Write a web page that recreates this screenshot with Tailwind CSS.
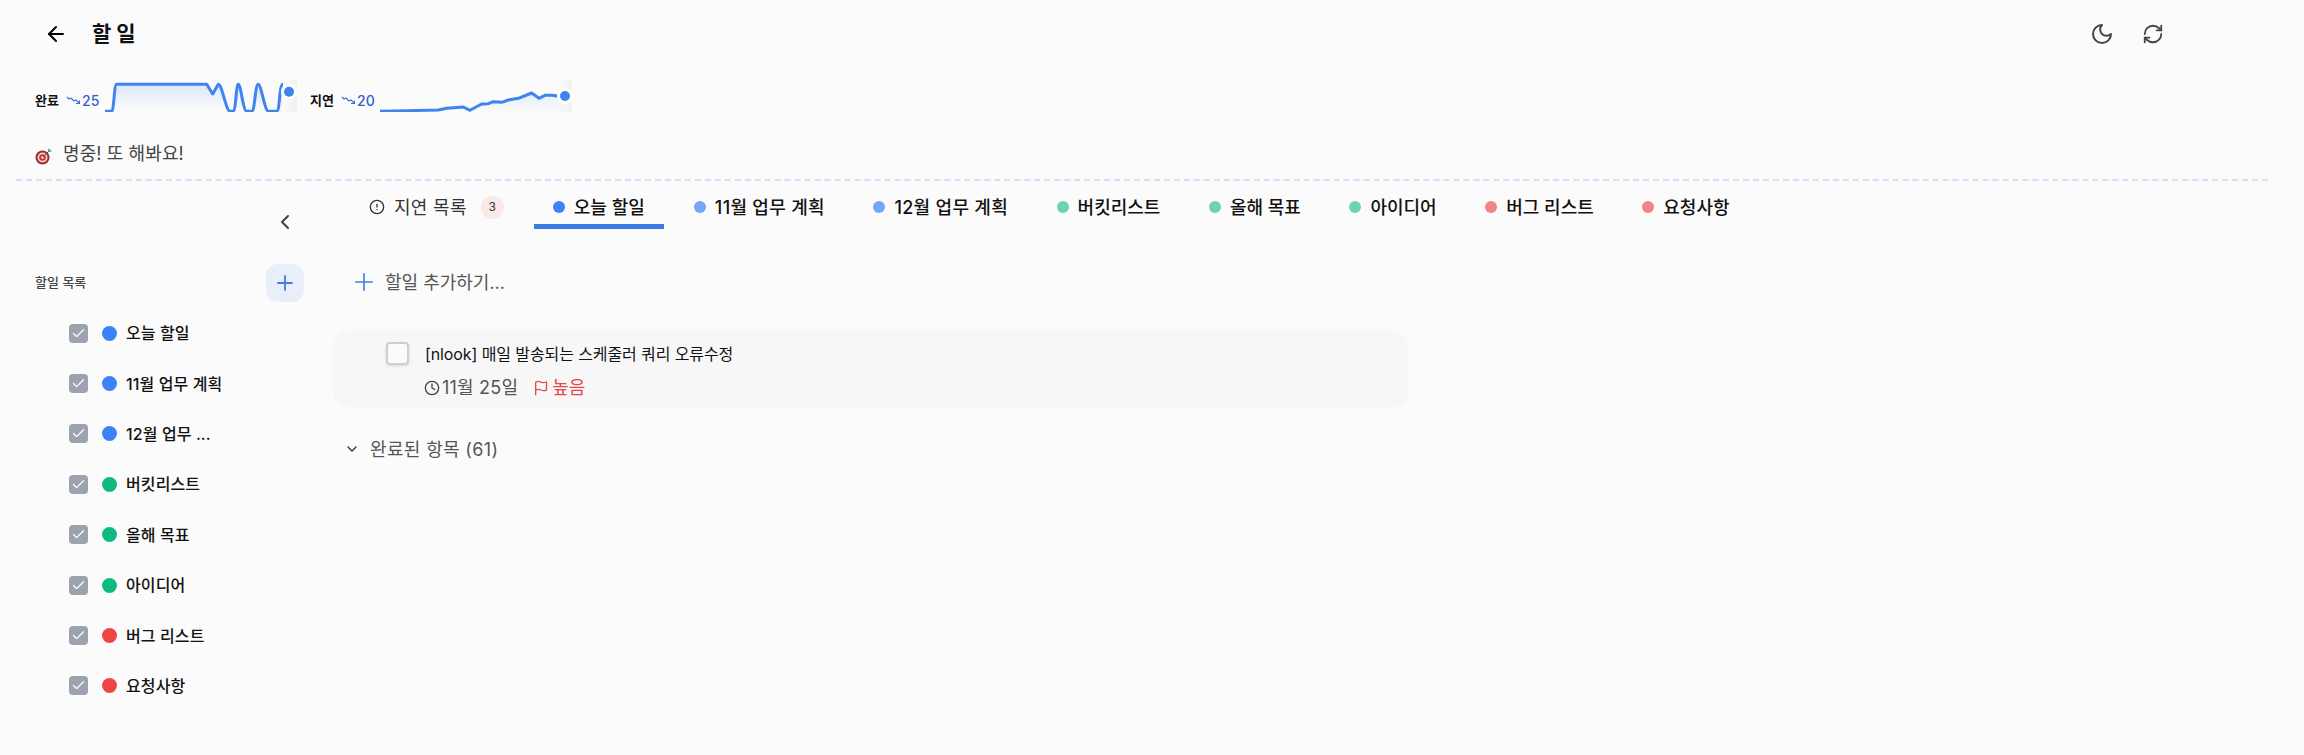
<!DOCTYPE html>
<html lang="ko">
<head>
<meta charset="utf-8">
<title>할 일</title>
<script src="https://cdn.jsdelivr.net/npm/@tailwindcss/browser@4"></script>
</head>
<body class="bg-[#fbfbfb] font-['Inter','Noto_Sans_CJK_KR',sans-serif] text-[#111] overflow-hidden">
<div class="w-[2304px] h-[755px] flex flex-col">

  <!-- header -->
  <header class="h-[68px] flex items-center pl-[44px] pr-[140px] shrink-0">
    <svg class="w-6 h-6 text-black" viewBox="0 0 24 24" fill="none" stroke="currentColor" stroke-width="2" stroke-linecap="round" stroke-linejoin="round"><path d="m12 19-7-7 7-7"/><path d="M19 12H5"/></svg>
    <h1 class="ml-6 text-[21px] font-bold">할 일</h1>
    <div class="ml-auto flex items-center gap-7 text-[#444]">
      <svg class="w-6 h-6" viewBox="0 0 24 24" fill="none" stroke="currentColor" stroke-width="2" stroke-linecap="round" stroke-linejoin="round"><path d="M12 3a6 6 0 0 0 9 9 9 9 0 1 1-9-9Z"/></svg>
      <svg class="w-[22px] h-[22px]" viewBox="0 0 24 24" fill="none" stroke="currentColor" stroke-width="2" stroke-linecap="round" stroke-linejoin="round"><path d="M3 12a9 9 0 0 1 9-9 9.75 9.75 0 0 1 6.74 2.74L21 8"/><path d="M21 3v5h-5"/><path d="M21 12a9 9 0 0 1-9 9 9.75 9.75 0 0 1-6.74-2.74L3 16"/><path d="M8 16H3v5"/></svg>
    </div>
  </header>

  <!-- stats -->
  <div class="mt-3 h-8 flex items-center pl-[35px] shrink-0">
    <span class="mt-2 text-[13px] font-bold leading-none w-[27px]">완료</span>
    <svg class="mt-2 ml-1 w-[14px] h-[10px] text-[#3b6fd8]" viewBox="0 0 14 10" fill="none" stroke="currentColor" stroke-width="1.100" stroke-linejoin="round"><path d="M1 2l2 2 2-1 3 3 2-1 3 3"/><path d="M10 8.500H13.500V5.500"/></svg>
    <span class="mt-2 ml-[2px] text-[14px] font-medium text-[#2f62c9] w-[23px]">25</span>
    <svg class="w-[192px] h-8" viewBox="0 0 192 32" fill="none">
      <defs>
        <linearGradient id="fillA" x1="0" y1="0" x2="0" y2="1"><stop offset="0" stop-color="#3b82f6" stop-opacity=".16"/><stop offset="1" stop-color="#3b82f6" stop-opacity="0"/></linearGradient>
        <linearGradient id="edgeA" x1="0" y1="0" x2="1" y2="0"><stop offset="0" stop-color="#888" stop-opacity="0"/><stop offset="1" stop-color="#888" stop-opacity=".1"/></linearGradient>
      </defs>
      <rect x="178" width="14" height="32" fill="url(#edgeA)"/>
      <path d="M0 31.300H6.700C9 31.300 9 4.300 11.700 4.300H101.700L107.700 14L113.300 4.300C117 4.300 121 31.300 125 31.300H128C131 31.300 131 4.300 133.300 4.300C136 4.300 138 31.300 141.700 31.300H146.700C150 31.300 150 4.300 153.300 4.300C156 4.300 160 31.300 163.300 31.300H171.700C175 31.300 174 4.300 178 4.300V32H0Z" fill="url(#fillA)"/>
      <path d="M0 31.300H6.700C9 31.300 9 4.300 11.700 4.300H101.700L107.700 14L113.300 4.300C117 4.300 121 31.300 125 31.300H128C131 31.300 131 4.300 133.300 4.300C136 4.300 138 31.300 141.700 31.300H146.700C150 31.300 150 4.300 153.300 4.300C156 4.300 160 31.300 163.300 31.300H171.700C175 31.300 174 4.300 178 4.300" stroke="#3f83ee" stroke-width="3" stroke-linejoin="round"/>
      <circle cx="184" cy="11.700" r="8" fill="#fff"/><circle cx="184" cy="11.700" r="5" fill="#3f83ee"/>
    </svg>
    <span class="mt-2 ml-[13px] text-[13px] font-bold leading-none w-[27px]">지연</span>
    <svg class="mt-2 ml-1 w-[14px] h-[10px] text-[#3b6fd8]" viewBox="0 0 14 10" fill="none" stroke="currentColor" stroke-width="1.100" stroke-linejoin="round"><path d="M1 2l2 2 2-1 3 3 2-1 3 3"/><path d="M10 8.500H13.500V5.500"/></svg>
    <span class="mt-2 ml-[2px] text-[14px] font-medium text-[#2f62c9] w-[23px]">20</span>
    <svg class="w-[192px] h-8" viewBox="0 0 192 32" fill="none">
      <defs>
        <linearGradient id="fillB" x1="0" y1="0" x2="0" y2="1"><stop offset="0" stop-color="#3b82f6" stop-opacity=".12"/><stop offset="1" stop-color="#3b82f6" stop-opacity="0"/></linearGradient>
      </defs>
      <rect x="178" width="14" height="32" fill="url(#edgeA)"/>
      <path d="M0 31.300L26.700 30.700L58.300 30L66.700 28.300L83.300 27L90 30.300L101.700 24L108.300 23.700L113.300 21.700L121.700 22.300L128.300 20L138.300 18.300L151.700 13L159 18.300L165 15.300L171.700 15.300L183 16.700V32H0Z" fill="url(#fillB)"/>
      <path d="M0 31.300L26.700 30.700L58.300 30L66.700 28.300L83.300 27L90 30.300L101.700 24L108.300 23.700L113.300 21.700L121.700 22.300L128.300 20L138.300 18.300L151.700 13L159 18.300L165 15.300L171.700 15.300L183 16.700" stroke="#3f83ee" stroke-width="3" stroke-linejoin="round"/>
      <circle cx="185" cy="16" r="8" fill="#fff"/><circle cx="185" cy="16" r="5" fill="#3f83ee"/>
    </svg>
  </div>

  <!-- message -->
  <div class="mt-[30px] h-6 flex items-center pl-[35px] gap-[10px] shrink-0">
    <svg class="mt-1 w-[18px] h-[18px]" viewBox="0 0 18 18" fill="none">
      <circle cx="7.500" cy="10.500" r="7" fill="#a8262b"/><circle cx="7.500" cy="10.500" r="5" fill="#e9d8d2"/><circle cx="7.500" cy="10.500" r="3.300" fill="#c8333a"/><circle cx="7.500" cy="10.500" r="1.300" fill="#f1dfda"/>
      <path d="M8 10L14 4" stroke="#555" stroke-width="1"/><path d="M13 2.500l1-1.500 1 2 2 .5-1.500 1.500-2-.5z" fill="#4fa8b0"/>
    </svg>
    <span class="text-[18px] text-[#444] leading-none tracking-[0.1px]">명중! 또 해봐요!</span>
  </div>

  <div class="mt-[13px] mx-4 w-[2252px] border-t-2 border-dashed border-[#d3e0f8] shrink-0"></div>

  <div class="flex flex-1 min-h-0">
    <!-- sidebar -->
    <aside class="w-[333px] shrink-0 pr-[29px]">
      <div class="h-6 mt-[29px] flex justify-end pr-[7px]">
        <svg class="w-6 h-6 text-[#444]" viewBox="0 0 24 24" fill="none" stroke="currentColor" stroke-width="2" stroke-linecap="round" stroke-linejoin="round"><path d="m15 18-6-6 6-6"/></svg>
      </div>
      <div class="mt-[30px] h-[38px] flex items-center justify-between pl-[35px]">
        <span class="text-[13px] font-medium text-[#444]">할일 목록</span>
        <span class="w-[38px] h-[38px] rounded-xl bg-[#e8effb] flex items-center justify-center text-[#3f7fe0]">
          <svg class="w-6 h-6" viewBox="0 0 24 24" fill="none" stroke="currentColor" stroke-width="1.800" stroke-linecap="round"><path d="M5 12h14"/><path d="M12 5v14"/></svg>
        </span>
      </div>
      <ul class="mt-[6px] pl-[69px] flex flex-col">
        <li class="h-[50.400px] flex items-center text-[16px] font-medium tracking-[0.1px]">
          <span class="w-[19px] h-[19px] rounded-[4px] bg-[#9ca3af] flex items-center justify-center mr-[14px]"><svg class="w-[15px] h-[15px] text-white" viewBox="0 0 24 24" fill="none" stroke="currentColor" stroke-width="2" stroke-linecap="round" stroke-linejoin="round"><path d="M20 6 9 17l-5-5"/></svg></span>
          <span class="w-[15px] h-[15px] rounded-full bg-[#3b82f6] mr-[9px]"></span><span>오늘 할일</span>
        </li>
        <li class="h-[50.400px] flex items-center text-[16px] font-medium tracking-[0.1px]">
          <span class="w-[19px] h-[19px] rounded-[4px] bg-[#9ca3af] flex items-center justify-center mr-[14px]"><svg class="w-[15px] h-[15px] text-white" viewBox="0 0 24 24" fill="none" stroke="currentColor" stroke-width="2" stroke-linecap="round" stroke-linejoin="round"><path d="M20 6 9 17l-5-5"/></svg></span>
          <span class="w-[15px] h-[15px] rounded-full bg-[#3b82f6] mr-[9px]"></span><span>11월 업무 계획</span>
        </li>
        <li class="h-[50.400px] flex items-center text-[16px] font-medium tracking-[0.1px]">
          <span class="w-[19px] h-[19px] rounded-[4px] bg-[#9ca3af] flex items-center justify-center mr-[14px]"><svg class="w-[15px] h-[15px] text-white" viewBox="0 0 24 24" fill="none" stroke="currentColor" stroke-width="2" stroke-linecap="round" stroke-linejoin="round"><path d="M20 6 9 17l-5-5"/></svg></span>
          <span class="w-[15px] h-[15px] rounded-full bg-[#3b82f6] mr-[9px]"></span><span>12월 업무 ...</span>
        </li>
        <li class="h-[50.400px] flex items-center text-[16px] font-medium tracking-[0.1px]">
          <span class="w-[19px] h-[19px] rounded-[4px] bg-[#9ca3af] flex items-center justify-center mr-[14px]"><svg class="w-[15px] h-[15px] text-white" viewBox="0 0 24 24" fill="none" stroke="currentColor" stroke-width="2" stroke-linecap="round" stroke-linejoin="round"><path d="M20 6 9 17l-5-5"/></svg></span>
          <span class="w-[15px] h-[15px] rounded-full bg-[#10b981] mr-[9px]"></span><span>버킷리스트</span>
        </li>
        <li class="h-[50.400px] flex items-center text-[16px] font-medium tracking-[0.1px]">
          <span class="w-[19px] h-[19px] rounded-[4px] bg-[#9ca3af] flex items-center justify-center mr-[14px]"><svg class="w-[15px] h-[15px] text-white" viewBox="0 0 24 24" fill="none" stroke="currentColor" stroke-width="2" stroke-linecap="round" stroke-linejoin="round"><path d="M20 6 9 17l-5-5"/></svg></span>
          <span class="w-[15px] h-[15px] rounded-full bg-[#10b981] mr-[9px]"></span><span>올해 목표</span>
        </li>
        <li class="h-[50.400px] flex items-center text-[16px] font-medium tracking-[0.1px]">
          <span class="w-[19px] h-[19px] rounded-[4px] bg-[#9ca3af] flex items-center justify-center mr-[14px]"><svg class="w-[15px] h-[15px] text-white" viewBox="0 0 24 24" fill="none" stroke="currentColor" stroke-width="2" stroke-linecap="round" stroke-linejoin="round"><path d="M20 6 9 17l-5-5"/></svg></span>
          <span class="w-[15px] h-[15px] rounded-full bg-[#10b981] mr-[9px]"></span><span>아이디어</span>
        </li>
        <li class="h-[50.400px] flex items-center text-[16px] font-medium tracking-[0.1px]">
          <span class="w-[19px] h-[19px] rounded-[4px] bg-[#9ca3af] flex items-center justify-center mr-[14px]"><svg class="w-[15px] h-[15px] text-white" viewBox="0 0 24 24" fill="none" stroke="currentColor" stroke-width="2" stroke-linecap="round" stroke-linejoin="round"><path d="M20 6 9 17l-5-5"/></svg></span>
          <span class="w-[15px] h-[15px] rounded-full bg-[#ef4444] mr-[9px]"></span><span>버그 리스트</span>
        </li>
        <li class="h-[50.400px] flex items-center text-[16px] font-medium tracking-[0.1px]">
          <span class="w-[19px] h-[19px] rounded-[4px] bg-[#9ca3af] flex items-center justify-center mr-[14px]"><svg class="w-[15px] h-[15px] text-white" viewBox="0 0 24 24" fill="none" stroke="currentColor" stroke-width="2" stroke-linecap="round" stroke-linejoin="round"><path d="M20 6 9 17l-5-5"/></svg></span>
          <span class="w-[15px] h-[15px] rounded-full bg-[#ef4444] mr-[9px]"></span><span>요청사항</span>
        </li>
      </ul>
    </aside>

    <!-- main -->
    <main class="flex-1 min-w-0">
      <nav class="mt-[9px] ml-4 flex gap-[8.500px] text-[18px] font-medium">
        <div class="h-[39px] px-5 flex items-center border-b-[5px] border-transparent font-normal text-[#333] tracking-[0.3px]">
          <svg class="w-4 h-4 mr-[9px] text-[#333]" viewBox="0 0 24 24" fill="none" stroke="currentColor" stroke-width="2" stroke-linecap="round"><circle cx="12" cy="12" r="10"/><path d="M12 8v4"/><path d="M12 16h.010"/></svg>
          <span>지연 목록</span>
          <span class="ml-[14px] w-[23px] h-[23px] rounded-full bg-[#f9e9e7] flex items-center justify-center text-[12px]">3</span>
        </div>
        <div class="mx-[1.500px] h-[39px] px-[19px] flex items-center gap-[9px] border-b-[5px] border-[#3b7de4]"><span class="w-3 h-3 rounded-full bg-[#3b82f6]"></span>오늘 할일</div>
        <div class="h-[39px] px-5 flex items-center gap-[9px] border-b-[5px] border-transparent tracking-[0.3px]"><span class="w-3 h-3 rounded-full bg-[#3b82f6]/70"></span>11월 업무 계획</div>
        <div class="h-[39px] px-5 flex items-center gap-[9px] border-b-[5px] border-transparent tracking-[0.3px]"><span class="w-3 h-3 rounded-full bg-[#3b82f6]/70"></span>12월 업무 계획</div>
        <div class="h-[39px] px-5 flex items-center gap-[9px] border-b-[5px] border-transparent"><span class="w-3 h-3 rounded-full bg-[#10b981]/60"></span>버킷리스트</div>
        <div class="h-[39px] px-5 flex items-center gap-[9px] border-b-[5px] border-transparent"><span class="w-3 h-3 rounded-full bg-[#10b981]/60"></span>올해 목표</div>
        <div class="h-[39px] px-5 flex items-center gap-[9px] border-b-[5px] border-transparent"><span class="w-3 h-3 rounded-full bg-[#10b981]/60"></span>아이디어</div>
        <div class="h-[39px] px-5 flex items-center gap-[9px] border-b-[5px] border-transparent"><span class="w-3 h-3 rounded-full bg-[#ef4444]/65"></span>버그 리스트</div>
        <div class="h-[39px] px-5 flex items-center gap-[9px] border-b-[5px] border-transparent"><span class="w-3 h-3 rounded-full bg-[#ef4444]/65"></span>요청사항</div>
      </nav>

      <div class="mt-[33px] h-10 pl-5 flex items-center gap-[10px] text-[18px] text-[#555]">
        <svg class="w-[22px] h-[22px] text-[#3f7fe0]" viewBox="0 0 24 24" fill="none" stroke="currentColor" stroke-width="1.800" stroke-linecap="round"><path d="M3 12h18"/><path d="M12 3v18"/></svg>
        <span>할일 추가하기...</span>
      </div>

      <div class="mt-7 w-[1075px] h-[77px] rounded-2xl bg-[#f7f7f7] pl-[53px] pt-3 flex gap-4">
        <span class="w-[23px] h-[23px] rounded-[4px] border-2 border-[#cfcfcf] bg-[#fbfbfb] shadow-sm shrink-0"></span>
        <div>
          <p class="text-[16px] leading-6 tracking-[-0.1px]">[nlook] 매일 발송되는 스케줄러 쿼리 오류수정</p>
          <div class="mt-[10px] -ml-px flex items-center text-[18px] leading-6">
            <svg class="w-4 h-4 text-[#444]" viewBox="0 0 24 24" fill="none" stroke="currentColor" stroke-width="2" stroke-linecap="round" stroke-linejoin="round"><circle cx="12" cy="12" r="10"/><path d="M12 6v6l4 2"/></svg>
            <span class="ml-[2px] text-[#555] tracking-[0.2px]">11월 25일</span>
            <svg class="ml-[15px] w-4 h-4 text-[#e5484d]" viewBox="0 0 24 24" fill="none" stroke="currentColor" stroke-width="2" stroke-linecap="round" stroke-linejoin="round"><path d="M4 22V4a1 1 0 0 1 .4-.8A6 6 0 0 1 8 2c3 0 5 2 7.300 2 1.700 0 2.900-.4 4.300-1a.5.5 0 0 1 .7.500v11c0 .3-.1.500-.4.700A6 6 0 0 1 16 16c-3 0-5-2-8-2a6 6 0 0 0-4 1.500"/></svg>
            <span class="ml-[3px] text-[#e5484d]">높음</span>
          </div>
        </div>
      </div>

      <div class="mt-[26px] h-8 pl-[11px] flex items-center gap-[10px] text-[18px] text-[#555] tracking-[0.35px]">
        <svg class="w-[16px] h-[16px] text-[#333]" viewBox="0 0 24 24" fill="none" stroke="currentColor" stroke-width="2" stroke-linecap="round" stroke-linejoin="round"><path d="m6 9 6 6 6-6"/></svg>
        <span>완료된 항목 (61)</span>
      </div>
    </main>
  </div>
</div>
</body>
</html>
